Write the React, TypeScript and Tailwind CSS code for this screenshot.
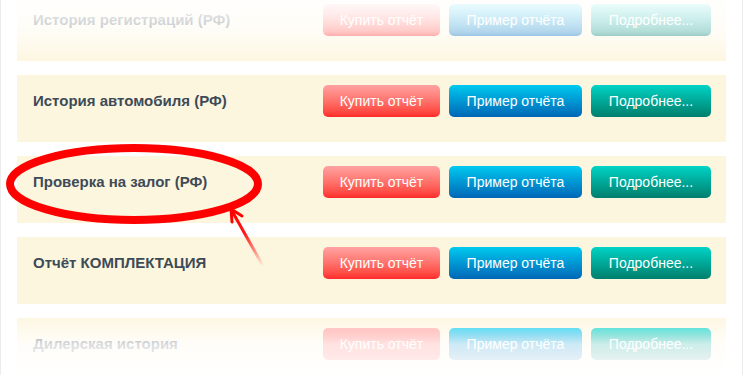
const rows = [
  'История регистраций (РФ)',
  'История автомобиля (РФ)',
  'Проверка на залог (РФ)',
  'Отчёт КОМПЛЕКТАЦИЯ',
  'Дилерская история',
]

function ReportRow({ title }: { title: string }) {
  return (
    <div className="mx-[16px] flex h-[67px] items-start bg-[#fdf6df] pl-[16px] pr-[15px] pt-[10px]">
      <div className="flex h-[32px] flex-1 items-center text-[15px] font-bold text-[#3d4b57]">{title}</div>
      <div className="flex gap-[9px] text-[14px] text-white [text-shadow:0_1px_1px_rgba(0,0,0,0.25)]">
        <button className="flex h-[32px] w-[117px] items-center justify-center rounded-[5px] bg-gradient-to-b from-[#ffa2a2] to-[#ff2a2a]">
          Купить отчёт
        </button>
        <button className="flex h-[32px] w-[133px] items-center justify-center rounded-[5px] bg-gradient-to-b from-[#00caef] to-[#0066b6]">
          Пример отчёта
        </button>
        <button className="flex h-[32px] w-[120px] items-center justify-center rounded-[5px] bg-gradient-to-b from-[#00d4c6] to-[#007f6d]">
          Подробнее...
        </button>
      </div>
    </div>
  )
}

export default function App() {
  return (
    <div className="relative h-[375px] w-[743px] overflow-hidden border-x border-[#ececec] bg-white font-['Liberation_Sans',Arial,sans-serif]">
      <div className="mt-[-6px] flex flex-col gap-[14px]">
        {rows.map((title) => (
          <ReportRow key={title} title={title} />
        ))}
      </div>

      {/* fades */}
      <div className="pointer-events-none absolute inset-x-0 top-0 h-[64px] bg-gradient-to-b from-white/95 via-white/70 to-white/0" />
      <div className="pointer-events-none absolute inset-x-0 bottom-0 h-[62px] bg-gradient-to-t from-white via-white/80 to-white/0" />

      {/* annotation */}
      <svg className="pointer-events-none absolute left-0 top-0" width="743" height="375">
        <defs>
          <linearGradient id="tail" x1="262" y1="266" x2="232" y2="212" gradientUnits="userSpaceOnUse">
            <stop offset="0" stopColor="#ff0000" stopOpacity="0" />
            <stop offset="0.6" stopColor="#ff0000" stopOpacity="0.9" />
            <stop offset="1" stopColor="#ff0000" />
          </linearGradient>
        </defs>
        <ellipse cx="133" cy="184" rx="124" ry="36" fill="none" stroke="#ff0000" strokeWidth="8" />
        <line x1="262" y1="266" x2="231" y2="211" stroke="url(#tail)" strokeWidth="3" strokeLinecap="round" />
        <path d="M241 216 L230 209 L231 222" fill="none" stroke="#ff0000" strokeWidth="3" strokeLinecap="round" strokeLinejoin="round" />
      </svg>
    </div>
  )
}
